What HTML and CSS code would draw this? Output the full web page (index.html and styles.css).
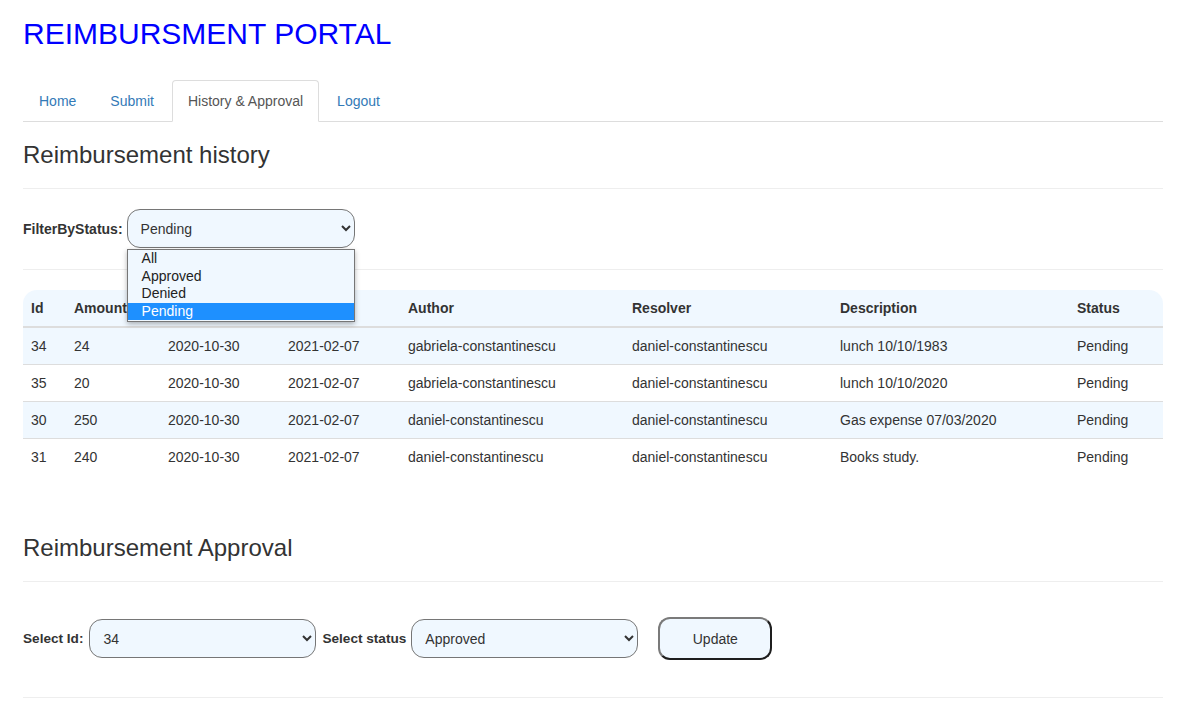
FILE: index.html
```html
<!DOCTYPE html>
<html lang="en">
<head>
<meta charset="utf-8">
<title>Reimbursment Portal</title>
<link rel="stylesheet" href="styles.css">
</head>
<body>
<div class="container">
  <h2 class="brand">REIMBURSMENT PORTAL</h2>

  <ul class="tabs">
    <li><a href="#">Home</a></li>
    <li><a href="#">Submit</a></li>
    <li class="active"><a href="#">History &amp; Approval</a></li>
    <li><a href="#">Logout</a></li>
  </ul>

  <h3 class="section-title">Reimbursement history</h3>
  <hr class="rule">

  <div class="filter-row">
    <label class="field-label" for="filter">FilterByStatus:</label>
    <div class="select-wrap">
      <select id="filter" class="select filter-select">
        <option>All</option>
        <option>Approved</option>
        <option>Denied</option>
        <option selected>Pending</option>
      </select>
      <div class="dropdown-list">
        <div class="dropdown-item">All</div>
        <div class="dropdown-item">Approved</div>
        <div class="dropdown-item">Denied</div>
        <div class="dropdown-item selected">Pending</div>
      </div>
    </div>
  </div>
  <hr class="rule">

  <table class="history">
    <colgroup>
      <col class="c-id"><col class="c-amount"><col class="c-date"><col class="c-date">
      <col class="c-author"><col class="c-resolver"><col class="c-desc"><col class="c-status">
    </colgroup>
    <thead>
      <tr>
        <th>Id</th><th>Amount</th><th>Submitted</th><th>Resolved</th>
        <th>Author</th><th>Resolver</th><th>Description</th><th>Status</th>
      </tr>
    </thead>
    <tbody>
      <tr>
        <td>34</td><td>24</td><td>2020-10-30</td><td>2021-02-07</td>
        <td>gabriela-constantinescu</td><td>daniel-constantinescu</td><td>lunch 10/10/1983</td><td>Pending</td>
      </tr>
      <tr>
        <td>35</td><td>20</td><td>2020-10-30</td><td>2021-02-07</td>
        <td>gabriela-constantinescu</td><td>daniel-constantinescu</td><td>lunch 10/10/2020</td><td>Pending</td>
      </tr>
      <tr>
        <td>30</td><td>250</td><td>2020-10-30</td><td>2021-02-07</td>
        <td>daniel-constantinescu</td><td>daniel-constantinescu</td><td>Gas expense 07/03/2020</td><td>Pending</td>
      </tr>
      <tr>
        <td>31</td><td>240</td><td>2020-10-30</td><td>2021-02-07</td>
        <td>daniel-constantinescu</td><td>daniel-constantinescu</td><td>Books study.</td><td>Pending</td>
      </tr>
    </tbody>
  </table>

  <h3 class="section-title approval-title">Reimbursement Approval</h3>
  <hr class="rule">

  <div class="approval-row">
    <label class="field-label id-label" for="sel-id">Select Id:</label>
    <select id="sel-id" class="select id-select">
      <option selected>34</option>
      <option>35</option>
      <option>30</option>
      <option>31</option>
    </select>
    <label class="field-label status-label" for="sel-status">Select status</label>
    <select id="sel-status" class="select status-select">
      <option selected>Approved</option>
      <option>Denied</option>
      <option>Pending</option>
    </select>
    <button class="update-btn" type="button">Update</button>
  </div>
  <hr class="rule">
</div>
</body>
</html>
```

FILE: styles.css
```css
* { box-sizing: border-box; }

body {
  margin: 0;
  font-family: "Liberation Sans", Arial, Helvetica, sans-serif;
  font-size: 14px;
  line-height: 20px;
  color: #333;
  background: #fff;
}

.container {
  width: 1140px;
  margin-left: 23px;
}

.brand {
  margin: 17px 0 30px;
  font-size: 30px;
  line-height: 33px;
  font-weight: 400;
  color: #0000ff;
}

.tabs {
  list-style: none;
  margin: 0;
  padding: 0;
  display: flex;
  border-bottom: 1px solid #ddd;
}

.tabs li {
  margin-bottom: -1px;
}

.tabs a {
  display: block;
  margin-right: 2px;
  padding: 10px 15px;
  line-height: 20px;
  border: 1px solid transparent;
  border-radius: 4px 4px 0 0;
  color: #337ab7;
  text-decoration: none;
}

.tabs li.active a {
  color: #555;
  background: #fff;
  border-color: #ddd;
  border-bottom-color: transparent;
}

.section-title {
  margin: 20px 0 20px;
  font-size: 24px;
  line-height: 26px;
  font-weight: 400;
  color: #333;
}

.approval-title {
  margin-top: 60px;
}

.rule {
  margin: 0;
  border: 0;
  border-top: 1px solid #eee;
  height: 0;
}

.filter-row {
  display: flex;
  align-items: center;
  margin: 20px 0 21px;
  height: 39px;
}

.field-label {
  font-weight: 700;
  font-size: 14px;
  color: #333;
}

.filter-row .field-label {
  margin-right: 4px;
}

.select-wrap {
  position: relative;
}

.select {
  height: 39px;
  width: 228px;
  padding: 0 8px 0 9px;
  border: 1px solid #767676;
  border-radius: 13px;
  background-color: #f0f8ff;
  color: #333;
  font-family: "Liberation Sans", Arial, Helvetica, sans-serif;
  font-size: 14px;
}

.dropdown-list {
  position: absolute;
  top: 40px;
  left: 0;
  width: 228px;
  z-index: 10;
  background: #f0f8ff;
  border: 1px solid #767676;
  box-shadow: 0 2px 5px rgba(0, 0, 0, 0.3);
  padding-bottom: 1px;
}

.dropdown-item {
  height: 17.5px;
  line-height: 17.5px;
  padding-left: 14px;
  color: #222;
  font-size: 14px;
}

.dropdown-item.selected {
  background: #1e90ff;
  color: #fff;
}

.history {
  width: 1140px;
  margin-top: 20px;
  border-collapse: separate;
  border-spacing: 0;
  table-layout: fixed;
}

.c-id { width: 43px; }
.c-amount { width: 94px; }
.c-date { width: 120px; }
.c-author { width: 224px; }
.c-resolver { width: 208px; }
.c-desc { width: 237px; }
.c-status { width: 94px; }

.history th,
.history td {
  padding: 8px;
  line-height: 20px;
  text-align: left;
  vertical-align: top;
  white-space: nowrap;
}

.history th {
  background: #f0f8ff;
  font-weight: 700;
  border-bottom: 2px solid #ddd;
}

.history th:first-child { border-top-left-radius: 14px; }
.history th:last-child { border-top-right-radius: 14px; }

.history td {
  border-top: 1px solid #ddd;
}

.history tbody tr:first-child td {
  border-top: 0;
}

.history tbody tr:nth-child(odd) td {
  background: #f0f8ff;
}

.approval-row {
  display: flex;
  align-items: center;
  height: 43px;
  margin: 35px 0 37px;
}

.approval-row .field-label {
  font-size: 13.6px;
}

.id-label { margin-right: 6px; }
.status-label { margin-right: 5px; }

.approval-row .select {
  width: 227px;
}

.id-select { margin-right: 6px; }
.status-select { margin-right: 20px; }

.update-btn {
  width: 114px;
  height: 43px;
  border: 2px solid;
  border-color: #7a7a7a #1e1e1e #1e1e1e #7a7a7a;
  border-radius: 12px;
  background: #f0f8ff;
  color: #333;
  font-family: "Liberation Sans", Arial, Helvetica, sans-serif;
  font-size: 14px;
}
```
